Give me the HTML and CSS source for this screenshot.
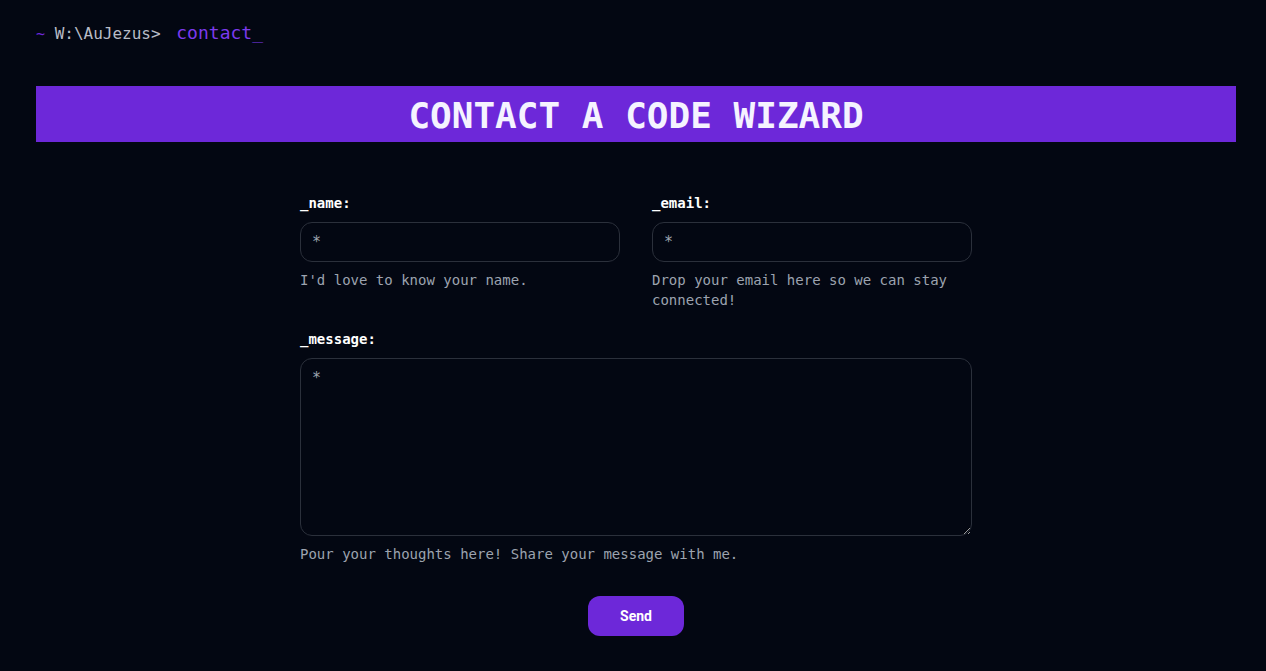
FILE: index.html
```html
<!DOCTYPE html>
<html lang="en">
<head>
<meta charset="utf-8">
<title>Contact</title>
<link rel="stylesheet" href="styles.css">
</head>
<body>
<div class="page">
  <div class="prompt"><span class="tilde">~</span> <span class="path">W:\AuJezus&gt;</span> <span class="cmd">contact_</span></div>
  <h1 class="banner">CONTACT A CODE WIZARD</h1>
  <form class="form">
    <div class="row">
      <div class="field">
        <label class="label" for="name">_name:</label>
        <input class="input" id="name" type="text" placeholder="*">
        <p class="help">I'd love to know your name.</p>
      </div>
      <div class="field">
        <label class="label" for="email">_email:</label>
        <input class="input" id="email" type="email" placeholder="*">
        <p class="help">Drop your email here so we can stay connected!</p>
      </div>
    </div>
    <div class="field">
      <label class="label" for="message">_message:</label>
      <textarea class="input textarea" id="message" placeholder="*"></textarea>
      <p class="help">Pour your thoughts here! Share your message with me.</p>
    </div>
    <div class="actions">
      <button class="send" type="button">Send</button>
    </div>
  </form>
</div>
</body>
</html>
```
FILE: styles.css
```css
* { box-sizing: border-box; }
html, body {
  margin: 0;
  padding: 0;
  background: #030712;
  height: 100%;
}
body {
  font-family: "DejaVu Sans Mono", "Liberation Mono", monospace;
  color: #ffffff;
}
.page {
  padding: 21px 30px 0 36px;
}
.prompt {
  font-size: 16px;
  line-height: 24px;
  color: #b4b8c2;
  white-space: pre;
}
.tilde { color: #6d28d9; font-size: 15px; }
.path { color: #b8bcc6; }
.cmd { color: #7c3aed; font-size: 18px; margin-left: 6px; }
.banner {
  margin: 40px 0 0 0;
  background: #6d28d9;
  color: #f5f3ff;
  text-align: center;
  font-size: 36px;
  font-weight: bold;
  line-height: 56px;
  height: 56px;
  padding-top: 2px;
}
.form {
  width: 672px;
  margin: 51px auto 0;
  display: flex;
  flex-direction: column;
  gap: 19px;
}
.row {
  display: grid;
  grid-template-columns: 1fr 1fr;
  gap: 32px;
}
.field {
  display: flex;
  flex-direction: column;
}
.label {
  font-size: 14px;
  line-height: 20px;
  font-weight: bold;
  color: #ffffff;
  margin-bottom: 9px;
}
.input {
  height: 40px;
  background: #030712;
  border: 1px solid #2b303b;
  border-radius: 12px;
  padding: 0 11px;
  font-family: "DejaVu Sans Mono", "Liberation Mono", monospace;
  font-size: 15px;
  color: #e5e7eb;
  outline: none;
}
.input::placeholder { color: #9ca3af; }
.textarea {
  height: 178px;
  padding: 9px 11px;
  resize: vertical;
  line-height: 20px;
}
.help {
  margin: 8px 0 0 0;
  font-size: 14px;
  line-height: 20px;
  color: #9ca3af;
}
.actions {
  display: flex;
  justify-content: center;
  margin-top: 13px;
}
.send {
  width: 96px;
  height: 40px;
  border: none;
  border-radius: 12px;
  background: #6d28d9;
  color: #ffffff;
  font-family: Roboto, "Liberation Sans", sans-serif;
  font-weight: bold;
  font-size: 14px;
  cursor: pointer;
}
```
